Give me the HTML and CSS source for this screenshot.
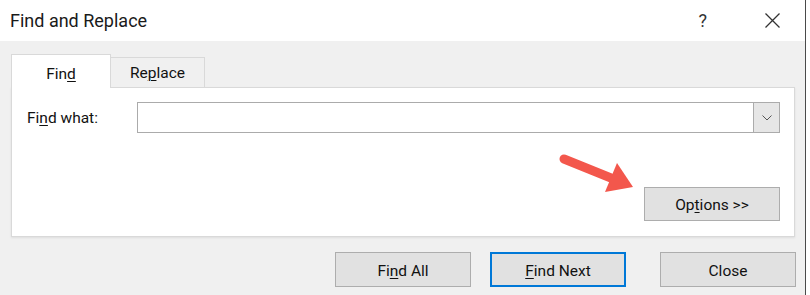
FILE: index.html
```html
<!DOCTYPE html>
<html>
<head>
<meta charset="utf-8">
<link rel="stylesheet" href="styles.css">
</head>
<body>
<div class="window">
  <div class="titlebar">
    <span class="title">Find and Replace</span>
    <span class="help">?</span>
    <svg class="close-x" width="15" height="15" viewBox="0 0 15 15"><path d="M0.5 0.5 L14.5 14.5 M14.5 0.5 L0.5 14.5" stroke="#333" stroke-width="1.3" fill="none"/></svg>
  </div>
  <div class="body">
    <div class="tabs">
      <div class="tab active">Fin<u>d</u></div>
      <div class="tab">Re<u>p</u>lace</div>
    </div>
    <div class="panel">
      <div class="row">
        <label class="label">Fi<u>n</u>d what:</label>
        <div class="combo">
          <div class="combo-field"></div>
          <div class="combo-btn">
            <svg width="10" height="6" viewBox="0 0 10 6"><path d="M0.5 0.5 L5 5 L9.5 0.5" stroke="#555" stroke-width="1" fill="none"/></svg>
          </div>
        </div>
      </div>
      <div class="options-row">
        <button class="btn options">Op<u>t</u>ions &gt;&gt;</button>
      </div>
      <svg class="arrow" width="810" height="295" viewBox="0 0 810 295">
        <line x1="575" y1="159" x2="622" y2="178" stroke="#f3574c" stroke-width="9" stroke-linecap="round"/>
        <polygon points="644,187 628,163 616,192" fill="#f3574c"/>
      </svg>
    </div>
    <div class="actions">
      <button class="btn">Fi<u>n</u>d All</button>
      <button class="btn default"><u>F</u>ind Next</button>
      <button class="btn close">Close</button>
    </div>
  </div>
</div>
</body>
</html>
```
FILE: styles.css
```css
html, body {
  margin: 0;
  padding: 0;
  background: #ffffff;
}
body {
  width: 810px;
  height: 295px;
  overflow: hidden;
  font-family: Roboto, "Noto Sans", "Liberation Sans", sans-serif;
  color: #111;
}
.window {
  width: 806px;
  height: 295px;
  border-right: 1px solid #4a4a4a;
  box-sizing: border-box;
  display: flex;
  flex-direction: column;
  background: #f0f0f0;
}
.titlebar {
  height: 41px;
  flex: none;
  background: #ffffff;
  display: flex;
  align-items: center;
  padding: 0 25px 0 10px;
}
.title {
  font-size: 18px;
  color: #1a1a1a;
}
.help {
  margin-left: auto;
  font-size: 18px;
  color: #333;
  margin-right: 58px;
}
.close-x {
  display: block;
  margin-top: -1px;
}
.body {
  flex: 1;
  padding: 13px 0 0 11px;
  position: relative;
}
.tabs {
  display: flex;
  align-items: flex-end;
  height: 33px;
}
.tab {
  box-sizing: border-box;
  height: 30px;
  width: 94px;
  border: 1px solid #d9d9d9;
  border-left: none;
  border-bottom: none;
  background: #f0f0f0;
  font-size: 15.5px;
  display: flex;
  align-items: center;
  justify-content: center;
  padding-top: 1px;
}
.tab.active {
  width: 100px;
  height: 34px;
  margin-bottom: -1px;
  border-left: 1px solid #d9d9d9;
  background: #ffffff;
  position: relative;
  z-index: 1;
  padding-top: 4px;
}
.panel {
  box-sizing: border-box;
  width: 784px;
  height: 150px;
  background: #ffffff;
  border: 1px solid #d9d9d9;
  box-shadow: 0 1px 2px rgba(0,0,0,0.08);
  padding: 14px 14px 0 15px;
}
.row {
  display: flex;
  align-items: center;
}
.label {
  width: 110px;
  font-size: 15.5px;
}
.combo {
  display: flex;
  width: 643px;
  height: 31px;
  box-sizing: border-box;
  border: 1px solid #ababab;
}
.combo-field {
  flex: 1;
  background: #fff;
}
.combo-btn {
  width: 25px;
  background: #e6e6e6;
  border-left: 1px solid #ababab;
  display: flex;
  align-items: center;
  justify-content: center;
}
.options-row {
  display: flex;
  justify-content: flex-end;
  margin-top: 54px;
}
.btn {
  box-sizing: border-box;
  width: 136px;
  height: 35px;
  background: #e1e1e1;
  border: 1px solid #adadad;
  font-family: Roboto, "Noto Sans", "Liberation Sans", sans-serif;
  font-size: 15.5px;
  color: #111;
  padding: 2px 0 0 0;
  margin: 0;
}
.btn.options {
  height: 34px;
  padding-top: 2px;
}
.btn.default {
  border: 2px solid #0078d7;
}
.arrow {
  position: absolute;
  left: -11px;
  top: -41px;
  pointer-events: none;
}
.actions {
  display: flex;
  justify-content: flex-end;
  gap: 19px;
  margin-top: 15px;
  padding-right: 9px;
}
.btn.close {
  margin-left: 15px;
}
u {
  text-underline-offset: 2px;
  text-decoration-thickness: 1px;
}
```
